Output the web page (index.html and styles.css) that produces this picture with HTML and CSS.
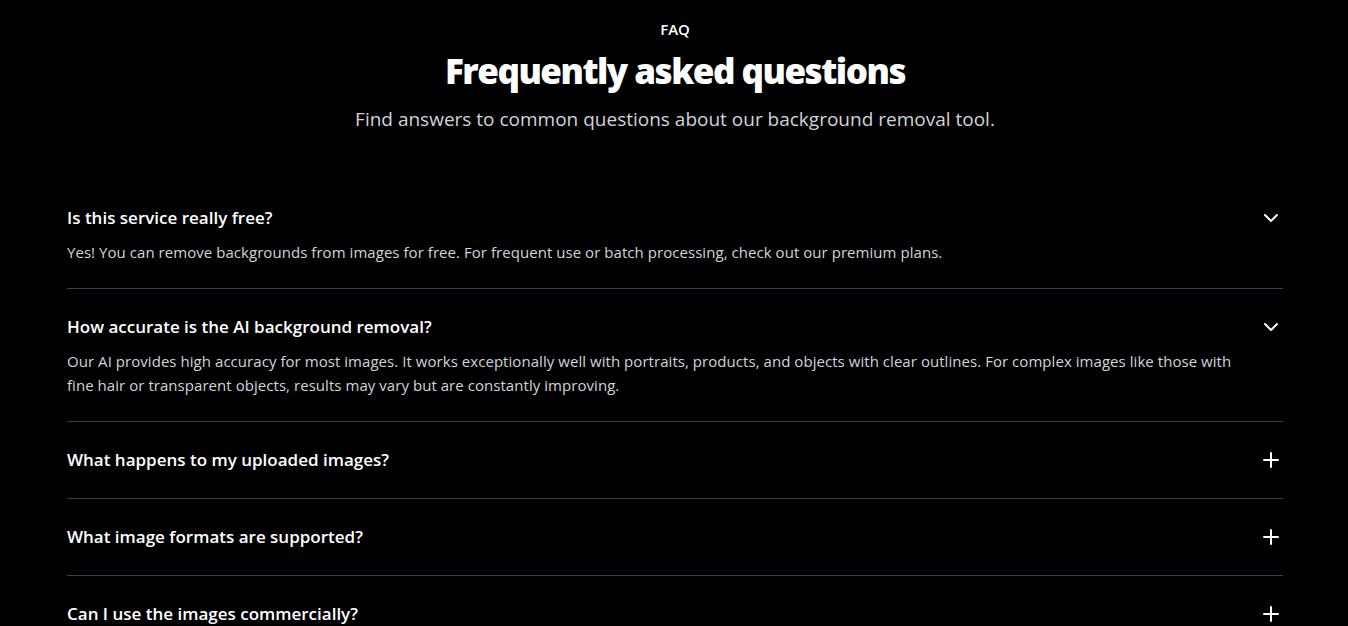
FILE: index.html
```html
<!DOCTYPE html>
<html lang="en">
<head>
<meta charset="utf-8">
<title>FAQ</title>
<link rel="stylesheet" href="styles.css">
</head>
<body>
<section class="faq">
  <header class="faq-head">
    <p class="eyebrow">FAQ</p>
    <h2 class="title">Frequently asked questions</h2>
    <p class="subtitle">Find answers to common questions about our background removal tool.</p>
  </header>
  <div class="list">
    <div class="item">
      <div class="q"><span>Is this service really free?</span>
        <svg class="icon" viewBox="0 0 24 24"><path d="m6 9 6 6 6-6"/></svg></div>
      <p class="a">Yes! You can remove backgrounds from images for free. For frequent use or batch processing, check out our premium plans.</p>
    </div>
    <div class="item">
      <div class="q"><span>How accurate is the AI background removal?</span>
        <svg class="icon" viewBox="0 0 24 24"><path d="m6 9 6 6 6-6"/></svg></div>
      <p class="a">Our AI provides high accuracy for most images. It works exceptionally well with portraits, products, and objects with clear outlines. For complex images like those with fine hair or transparent objects, results may vary but are constantly improving.</p>
    </div>
    <div class="item">
      <div class="q"><span>What happens to my uploaded images?</span>
        <svg class="icon" viewBox="0 0 24 24"><path d="M5 12h14M12 5v14"/></svg></div>
    </div>
    <div class="item">
      <div class="q"><span>What image formats are supported?</span>
        <svg class="icon" viewBox="0 0 24 24"><path d="M5 12h14M12 5v14"/></svg></div>
    </div>
    <div class="item">
      <div class="q"><span>Can I use the images commercially?</span>
        <svg class="icon" viewBox="0 0 24 24"><path d="M5 12h14M12 5v14"/></svg></div>
    </div>
  </div>
</section>
</body>
</html>
```

FILE: styles.css
```css
* { box-sizing: border-box; }
html, body { margin: 0; padding: 0; background: #000; }
body {
  font-family: "Open Sans", "Noto Sans", sans-serif;
  color: #fff;
  overflow: hidden;
  padding-left: 2px;
}
.faq {
  max-width: 1216px;
  margin: 0 auto;
  padding-top: 19px;
}
.faq-head {
  text-align: center;
  margin-bottom: 47px;
}
.eyebrow {
  margin: 0;
  font-size: 15px;
  line-height: 20px;
  font-weight: 600;
}
.title {
  margin: 12px 0 0;
  font-size: 35px;
  line-height: 40px;
  font-weight: 800;
  letter-spacing: -1.5px;
}
.subtitle {
  margin: 14px 0 0;
  font-size: 19px;
  line-height: 28px;
  color: #d1d5db;
}
.item {
  padding: 24px 0;
  border-bottom: 1px solid #374151;
}
.q {
  display: flex;
  align-items: center;
  justify-content: space-between;
  font-size: 17px;
  line-height: 28px;
  font-weight: 600;
}
.icon {
  width: 24px;
  height: 24px;
  fill: none;
  stroke: #fff;
  stroke-width: 2;
  stroke-linecap: round;
  stroke-linejoin: round;
  flex-shrink: 0;
}
.a {
  margin: 8px 48px 0 0;
  font-size: 15px;
  line-height: 24px;
  letter-spacing: 0.05px;
  color: #d1d5db;
}
```
